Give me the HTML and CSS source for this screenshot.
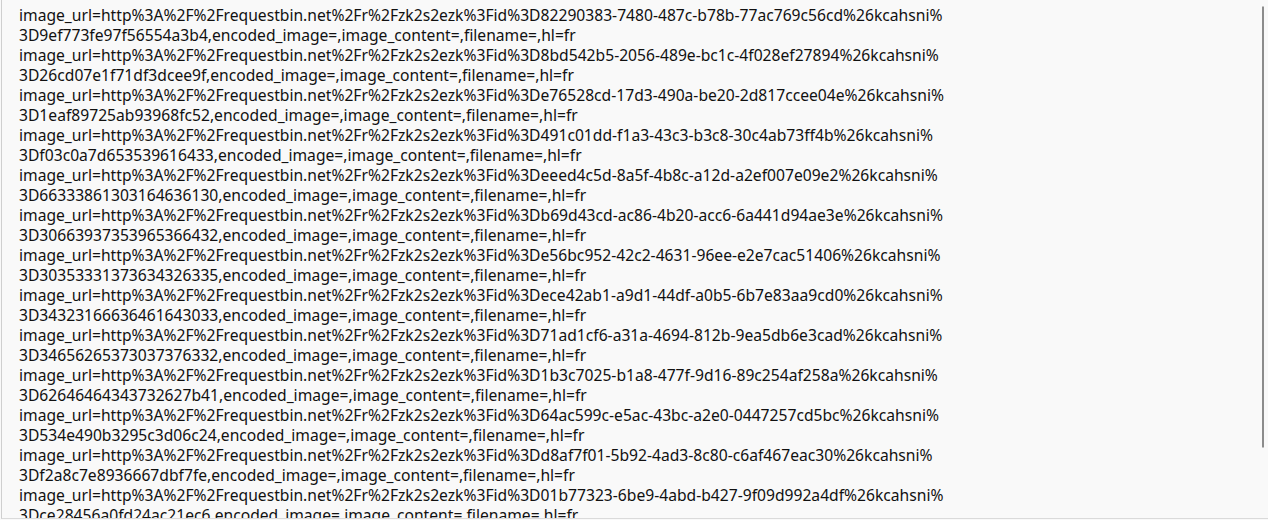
FILE: index.html
```html
<!DOCTYPE html>
<html>
<head>
<meta charset="utf-8">
<link rel="stylesheet" href="styles.css">
</head>
<body>
<div class="frame">
  <div class="log">
    <div class="line">image_url=http%3A%2F%2Frequestbin.net%2Fr%2Fzk2s2ezk%3Fid%3D82290383-7480-487c-b78b-77ac769c56cd%26kcahsni%</div>
    <div class="line">3D9ef773fe97f56554a3b4,encoded_image=,image_content=,filename=,hl=fr</div>
    <div class="line">image_url=http%3A%2F%2Frequestbin.net%2Fr%2Fzk2s2ezk%3Fid%3D8bd542b5-2056-489e-bc1c-4f028ef27894%26kcahsni%</div>
    <div class="line">3D26cd07e1f71df3dcee9f,encoded_image=,image_content=,filename=,hl=fr</div>
    <div class="line">image_url=http%3A%2F%2Frequestbin.net%2Fr%2Fzk2s2ezk%3Fid%3De76528cd-17d3-490a-be20-2d817ccee04e%26kcahsni%</div>
    <div class="line">3D1eaf89725ab93968fc52,encoded_image=,image_content=,filename=,hl=fr</div>
    <div class="line">image_url=http%3A%2F%2Frequestbin.net%2Fr%2Fzk2s2ezk%3Fid%3D491c01dd-f1a3-43c3-b3c8-30c4ab73ff4b%26kcahsni%</div>
    <div class="line">3Df03c0a7d653539616433,encoded_image=,image_content=,filename=,hl=fr</div>
    <div class="line">image_url=http%3A%2F%2Frequestbin.net%2Fr%2Fzk2s2ezk%3Fid%3Deeed4c5d-8a5f-4b8c-a12d-a2ef007e09e2%26kcahsni%</div>
    <div class="line">3D66333861303164636130,encoded_image=,image_content=,filename=,hl=fr</div>
    <div class="line">image_url=http%3A%2F%2Frequestbin.net%2Fr%2Fzk2s2ezk%3Fid%3Db69d43cd-ac86-4b20-acc6-6a441d94ae3e%26kcahsni%</div>
    <div class="line">3D30663937353965366432,encoded_image=,image_content=,filename=,hl=fr</div>
    <div class="line">image_url=http%3A%2F%2Frequestbin.net%2Fr%2Fzk2s2ezk%3Fid%3De56bc952-42c2-4631-96ee-e2e7cac51406%26kcahsni%</div>
    <div class="line">3D30353331373634326335,encoded_image=,image_content=,filename=,hl=fr</div>
    <div class="line">image_url=http%3A%2F%2Frequestbin.net%2Fr%2Fzk2s2ezk%3Fid%3Dece42ab1-a9d1-44df-a0b5-6b7e83aa9cd0%26kcahsni%</div>
    <div class="line">3D34323166636461643033,encoded_image=,image_content=,filename=,hl=fr</div>
    <div class="line">image_url=http%3A%2F%2Frequestbin.net%2Fr%2Fzk2s2ezk%3Fid%3D71ad1cf6-a31a-4694-812b-9ea5db6e3cad%26kcahsni%</div>
    <div class="line">3D34656265373037376332,encoded_image=,image_content=,filename=,hl=fr</div>
    <div class="line">image_url=http%3A%2F%2Frequestbin.net%2Fr%2Fzk2s2ezk%3Fid%3D1b3c7025-b1a8-477f-9d16-89c254af258a%26kcahsni%</div>
    <div class="line">3D62646464343732627b41,encoded_image=,image_content=,filename=,hl=fr</div>
    <div class="line">image_url=http%3A%2F%2Frequestbin.net%2Fr%2Fzk2s2ezk%3Fid%3D64ac599c-e5ac-43bc-a2e0-0447257cd5bc%26kcahsni%</div>
    <div class="line">3D534e490b3295c3d06c24,encoded_image=,image_content=,filename=,hl=fr</div>
    <div class="line">image_url=http%3A%2F%2Frequestbin.net%2Fr%2Fzk2s2ezk%3Fid%3Dd8af7f01-5b92-4ad3-8c80-c6af467eac30%26kcahsni%</div>
    <div class="line">3Df2a8c7e8936667dbf7fe,encoded_image=,image_content=,filename=,hl=fr</div>
    <div class="line">image_url=http%3A%2F%2Frequestbin.net%2Fr%2Fzk2s2ezk%3Fid%3D01b77323-6be9-4abd-b427-9f09d992a4df%26kcahsni%</div>
    <div class="line">3Dce28456a0fd24ac21ec6,encoded_image=,image_content=,filename=,hl=fr</div>
  </div>
  <div class="scroll-thumb"></div>
</div>
</body>
</html>
```

FILE: styles.css
```css
html, body {
  margin: 0;
  padding: 0;
  background: #f9f9f9;
}

.frame {
  position: relative;
  box-sizing: border-box;
  width: 1268px;
  height: 519px;
  margin-left: 1px;
  border-left: 1px solid #cfcfcf;
  border-bottom: 1px solid #dadada;
  background: #f9f9f9;
  overflow: hidden;
}

.log {
  padding: 5px 0 0 17px;
  font-family: "Noto Sans", "Open Sans", sans-serif;
  font-size: 15.65px;
  line-height: 20px;
  color: #111;
}

.line {
  white-space: nowrap;
}

.scroll-thumb {
  position: absolute;
  top: 6px;
  left: 1260px;
  width: 2px;
  height: 440px;
  background: #8c8c8c;
  border-top: 1px solid #c4c4c4;
  border-bottom: 1px solid #c4c4c4;
}
```
